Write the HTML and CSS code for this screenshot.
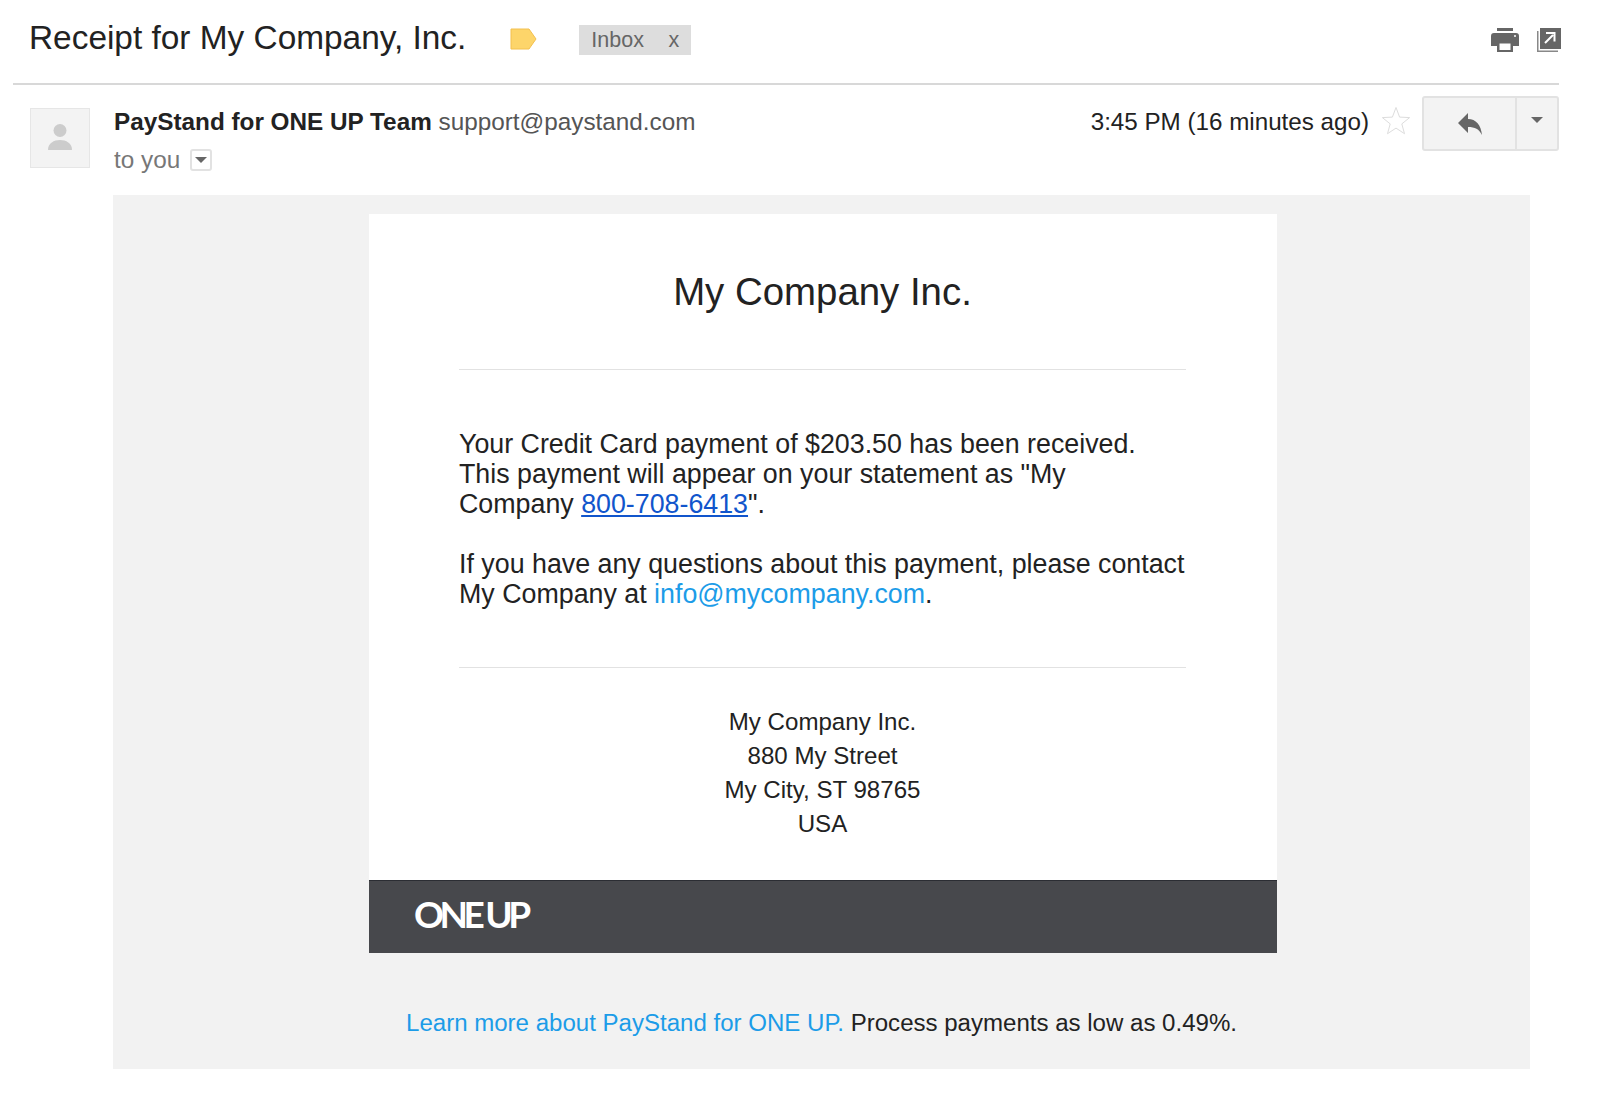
FILE: index.html
```html
<!DOCTYPE html>
<html lang="en">
<head>
    <meta charset="UTF-8">
    <title>Receipt for My Company, Inc.</title>
    <link rel="stylesheet" href="styles.css">
</head>
<body>
<div class="subject-bar">
    <h1 class="subject">Receipt for My Company, Inc.</h1>
    <svg class="label-tag" width="28" height="22" viewBox="0 0 28 22"><path d="M1 1h18l7 10-7 10H1z" fill="#fdd56a" stroke="#f3c04f"/></svg>
    <span class="inbox-chip"><span>Inbox</span><span>x</span></span>
    <div class="top-icons">
        <svg width="28" height="24" viewBox="0 0 28 24"><path d="M6 0h16v3H6zM3 5h22a3 3 0 0 1 3 3v10h-6v-4H6v4H0V8a3 3 0 0 1 3-3z" fill="#666"/><path d="M6 14h16v10H6z" fill="#666"/><path d="M8.500 15.500h11V22h-11z" fill="#fff"/><circle cx="24" cy="8" r="1" fill="#fff"/></svg>
        <svg width="24" height="24" viewBox="0 0 24 24"><path d="M3 0h21v21H3z" fill="#666"/><path d="M0 3h1.500v19.500H21V24H0z" fill="#888"/><path d="M8 15l8-8M9 5h8.500v8.500" stroke="#fff" stroke-width="2" fill="none"/></svg>
    </div>
</div>

<div class="message-head">
    <div class="avatar">
        <svg width="26" height="28" viewBox="0 0 26 28"><circle cx="13" cy="6.500" r="6.500" fill="#ccc"/><path d="M1 26c0-7 6-10 12-10s12 3 12 10z" fill="#ccc"/></svg>
    </div>
    <div class="sender">
        <div class="sender-line"><b>PayStand for ONE UP Team</b> <span>support@paystand.com</span></div>
        <div class="to-line">to you <span class="to-arrow"><i></i></span></div>
    </div>
    <div class="time">3:45 PM (16 minutes ago)</div>
    <svg class="star" width="30" height="30" viewBox="0 0 30 30"><path d="M15 1.500l3.600 9.600 10 .5-7.800 6.300 2.700 9.800L15 22.100l-8.500 5.600 2.700-9.800-7.800-6.300 10-.5z" fill="#fff" stroke="#ddd"/></svg>
    <div class="reply-group">
        <div class="reply-btn">
            <svg width="26" height="24" viewBox="0 0 26 24"><path d="M11 1v6c8 0 13 6 14 16-3-6-7-8-14-8v6L1 11z" fill="#666"/></svg>
        </div>
        <div class="more-btn"><i></i></div>
    </div>
</div>

<div class="mail-body">
    <div class="card">
        <div class="card-main">
            <h2 class="company">My Company Inc.</h2>
            <div class="notice">
                <p>Your Credit Card payment of $203.50 has been received.<br>This payment will appear on your statement as "My<br>Company <a class="phone" href="#">800-708-6413</a>".</p>
                <p>If you have any questions about this payment, please contact<br>My Company at <a class="mail-link" href="#">info@mycompany.com</a>.</p>
            </div>
            <div class="address">My Company Inc.<br>880 My Street<br>My City, ST 98765<br>USA</div>
        </div>
        <div class="card-footer"><span class="logo">ONE<span class="logo-up">UP</span></span></div>
    </div>
    <p class="learn"><a class="mail-link" href="#">Learn more about PayStand for ONE UP.</a> Process payments as low as 0.49%.</p>
</div>
</body>
</html>
```

FILE: styles.css
```css
body {
    margin: 0;
    background: #fff;
    color: #222;
    font-family: "Liberation Sans", Arial, sans-serif;
}
.subject-bar {
    display: flex;
    align-items: center;
    height: 83px;
    margin: 0 41px 0 13px;
    padding-left: 16px;
    border-bottom: 2px solid #d8d8d8;
}
.subject {
    margin: 0;
    font-size: 33.400px;
    font-weight: normal;
    color: #222;
    padding-bottom: 8px;
}
.label-tag {
    margin: 0 0 6px 44px;
}
.inbox-chip {
    display: flex;
    justify-content: space-between;
    width: 88px;
    height: 30px;
    margin: 1px 0 5px 41px;
    padding: 0 12px;
    background: #ddd;
    color: #666;
    font-size: 21.500px;
    line-height: 30px;
}
.top-icons {
    display: flex;
    gap: 18px;
    margin: 0 -2px 4px auto;
}
.message-head {
    display: flex;
    align-items: flex-start;
    height: 110px;
    margin: 0 41px 0 30px;
}
.avatar {
    display: flex;
    align-items: center;
    justify-content: center;
    width: 58px;
    height: 58px;
    margin-top: 23px;
    background: #f3f3f3;
    border: 1px solid #e6e6e6;
}
.sender {
    margin: 23px 0 0 24px;
    font-size: 24.300px;
}
.sender-line b {
    color: #222;
}
.sender-line span {
    color: #555;
}
.to-line {
    display: flex;
    align-items: center;
    gap: 10px;
    margin-top: 10px;
    color: #777;
}
.to-arrow {
    display: flex;
    align-items: center;
    justify-content: center;
    width: 22px;
    height: 22px;
    border: 2px solid #e2e2e2;
    border-radius: 3px;
    box-sizing: border-box;
}
.to-arrow i,
.more-btn i {
    width: 0;
    height: 0;
    border-left: 6px solid transparent;
    border-right: 6px solid transparent;
    border-top: 6px solid #666;
}
.time {
    margin: 23px 0 0 auto;
    font-size: 24.200px;
    color: #222;
}
.star {
    margin: 21px 0 0 12px;
}
.reply-group {
    display: flex;
    height: 55px;
    margin: 11px 0 0 11px;
    background: #f3f3f3;
    border: 2px solid #e2e2e2;
    border-radius: 3px;
    box-sizing: border-box;
}
.reply-btn {
    display: flex;
    align-items: center;
    justify-content: center;
    width: 91px;
    border-right: 2px solid #e2e2e2;
}
.more-btn {
    display: flex;
    justify-content: center;
    padding-top: 19px;
    width: 40px;
}
.mail-body {
    width: 1417px;
    height: 874px;
    margin-left: 113px;
    padding-top: 19px;
    background: #f2f2f2;
    box-sizing: border-box;
}
.card {
    width: 908px;
    margin-left: 256px;
    background: #fff;
}
.card-main {
    padding: 0 91px 39px 90px;
}
.company {
    margin: 0;
    height: 156px;
    box-sizing: border-box;
    padding-top: 53px;
    border-bottom: 1px solid #e2e2e2;
    text-align: center;
    font-size: 38.400px;
    line-height: 50px;
    font-weight: normal;
    color: #222;
}
.notice {
    height: 298px;
    box-sizing: border-box;
    padding-top: 59px;
    border-bottom: 1px solid #e2e2e2;
    font-size: 26.800px;
    line-height: 30px;
    white-space: nowrap;
}
.notice p {
    margin: 0 0 30px;
}
.phone {
    color: #1155cc;
}
.mail-link {
    color: #1c9ce8;
    text-decoration: none;
}
.address {
    padding-top: 37px;
    text-align: center;
    font-size: 24.100px;
    line-height: 34px;
}
.card-footer {
    display: flex;
    align-items: center;
    height: 73px;
    padding: 0 0 8px 45px;
    background: #47484c;
    border-top: 1px solid #2b2d33;
    box-sizing: border-box;
}
.logo {
    color: #fff;
    font-family: Lato, sans-serif;
    font-weight: 700;
    font-size: 37px;
    letter-spacing: -4.500px;
}
.logo-up {
    margin-left: 5px;
}
.learn {
    margin: 56px 0 0;
    text-align: center;
    font-size: 24.050px;
    color: #222;
}
```
